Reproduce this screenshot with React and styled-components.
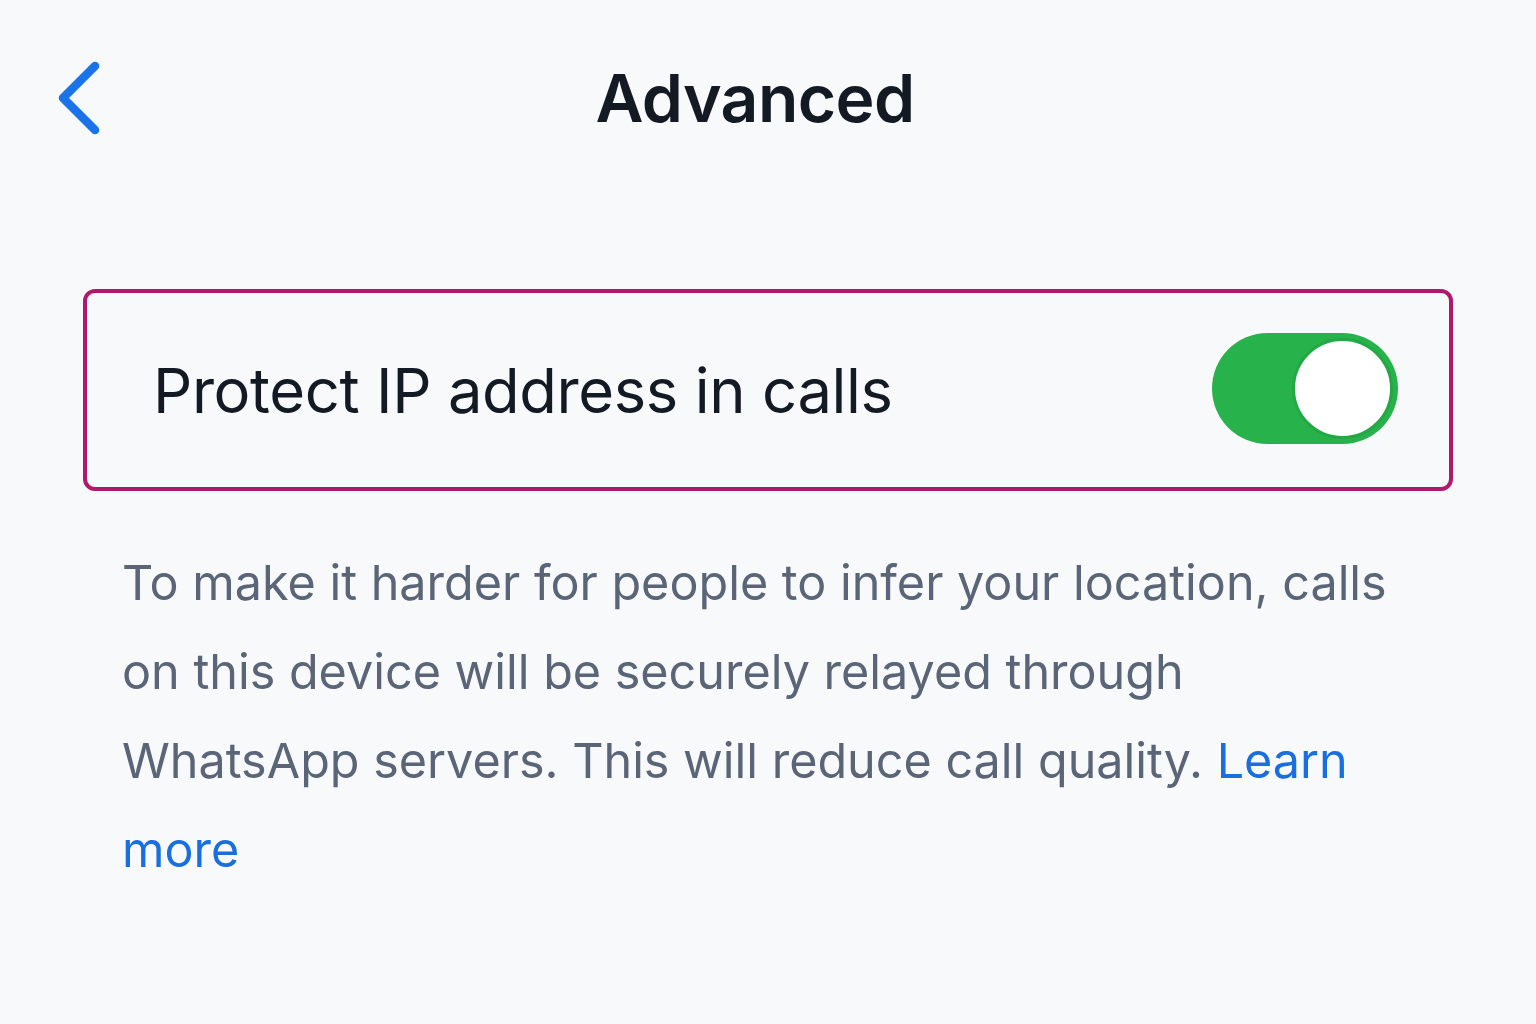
import styled, { createGlobalStyle } from "styled-components";
import { useState } from "react";

const GlobalStyle = createGlobalStyle`
  html, body {
    margin: 0;
    padding: 0;
    background: #f8f9fb;
  }
  body {
    font-family: Inter, "Noto Sans", "Liberation Sans", sans-serif;
    -webkit-font-smoothing: antialiased;
  }
`;

const Page = styled.div`
  width: 1536px;
  height: 1024px;
  display: flex;
  flex-direction: column;
  background: #f8f9fb;
`;

const Header = styled.header`
  height: 196px;
  padding: 0 57px;
  display: grid;
  grid-template-columns: 1fr auto 1fr;
  align-items: center;
`;

const BackButton = styled.button`
  justify-self: start;
  width: 44px;
  height: 74px;
  padding: 0;
  border: none;
  background: none;
  cursor: pointer;
  display: flex;
  align-items: center;
`;

const Title = styled.h1`
  margin: 0 26px 0 0;
  font-size: 66px;
  font-weight: 600;
  color: #141a24;
  letter-spacing: -0.6px;
`;

const Content = styled.main`
  padding: 93px 83px 0;
  display: flex;
  flex-direction: column;
`;

const SettingCard = styled.div`
  height: 202px;
  box-sizing: border-box;
  border: 4px solid #b0186b;
  border-radius: 12px;
  padding: 0 51px 0 66px;
  display: flex;
  align-items: center;
  justify-content: space-between;
`;

const SettingLabel = styled.span`
  font-size: 61.5px;
  font-weight: 400;
  color: #141a24;
  letter-spacing: -0.4px;
`;

const Switch = styled.button`
  position: relative;
  width: 186px;
  height: 111px;
  padding: 0;
  border: none;
  border-radius: 56px;
  background: ${(p) => (p.$on ? "#27b24c" : "#d3d6dc")};
  cursor: pointer;
  margin-top: -3px;
`;

const Knob = styled.span`
  position: absolute;
  top: 5px;
  left: ${(p) => (p.$on ? "80px" : "5px")};
  width: 101px;
  height: 101px;
  box-sizing: border-box;
  border-radius: 50%;
  background: #fff;
  border: 3px solid #22a845;
`;

const Description = styled.p`
  margin: 47px 0 0 39px;
  max-width: 1300px;
  font-size: 48.5px;
  line-height: 89px;
  font-weight: 400;
  color: #5a6577;
`;

const LearnMore = styled.a`
  color: #1a6fe0;
  text-decoration: none;
`;

const ChevronLeft = () => (
  <svg width="44" height="74" viewBox="0 0 44 74" fill="none">
    <path
      d="M38 5 L6 37 L38 69"
      stroke="#1a73e8"
      strokeWidth="8.5"
      strokeLinecap="round"
      strokeLinejoin="round"
    />
  </svg>
);

export default function App() {
  const [protectIp, setProtectIp] = useState(true);

  return (
    <>
      <GlobalStyle />
      <Page>
        <Header>
          <BackButton aria-label="Back">
            <ChevronLeft />
          </BackButton>
          <Title>Advanced</Title>
          <div />
        </Header>
        <Content>
          <SettingCard>
            <SettingLabel>Protect IP address in calls</SettingLabel>
            <Switch $on={protectIp} onClick={() => setProtectIp(!protectIp)}>
              <Knob $on={protectIp} />
            </Switch>
          </SettingCard>
          <Description>
            To make it harder for people to infer your location, calls on this
            device will be securely relayed through WhatsApp servers. This will
            reduce call quality. <LearnMore href="#">Learn more</LearnMore>
          </Description>
        </Content>
      </Page>
    </>
  );
}
